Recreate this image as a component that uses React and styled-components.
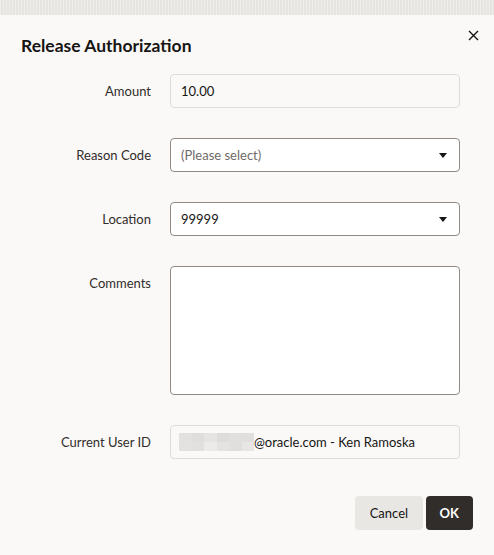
import React from "react";
import styled, { createGlobalStyle } from "styled-components";

const GlobalStyle = createGlobalStyle`
  html, body {
    margin: 0;
    padding: 0;
    background: #e8e6e3;
    font-family: "Lato", "Noto Sans", sans-serif;
    color: #161513;
  }
`;

const Backdrop = styled.div`
  height: 15px;
  background-color: #e7e5e2;
  background-image: repeating-linear-gradient(
    90deg,
    rgba(255, 255, 255, 0.35) 0 1px,
    transparent 1px 3px
  );
`;

const Dialog = styled.div`
  background: #fbf9f8;
  min-height: 540px;
  box-sizing: border-box;
  padding: 0 21px 24px 21px;
  display: flex;
  flex-direction: column;
`;

const Header = styled.div`
  display: flex;
  justify-content: space-between;
  align-items: flex-start;
  padding-top: 13px;
  height: 59px;
  box-sizing: border-box;
`;

const Title = styled.h1`
  margin: 7px 0 0;
  font-size: 17.5px;
  font-weight: 700;
  line-height: 22px;
  color: #161513;
`;

const CloseButton = styled.button`
  border: 0;
  background: transparent;
  padding: 0;
  width: 14px;
  height: 14px;
  margin-right: -7px;
  cursor: pointer;
  display: flex;
  align-items: center;
  justify-content: center;
`;

const Form = styled.div`
  display: grid;
  grid-template-columns: 130px 290px;
  column-gap: 19px;
  row-gap: 30px;
`;

const Label = styled.label`
  text-align: right;
  font-size: 13px;
  line-height: 34px;
  color: #312d2a;
`;

const Field = styled.div`
  box-sizing: border-box;
  height: ${(p) => p.height || 34}px;
  border: 1px solid ${(p) => (p.readOnly ? "#dfdcd8" : "#8f8a86")};
  border-radius: 4px;
  background: ${(p) => (p.readOnly ? "transparent" : "#ffffff")};
  display: flex;
  align-items: center;
  justify-content: space-between;
  padding: 0 12px 0 10px;
  font-size: 13px;
  color: ${(p) => (p.placeholder ? "#6f6a66" : "#161513")};
`;

const Caret = styled.span`
  width: 0;
  height: 0;
  border-left: 4.5px solid transparent;
  border-right: 4.5px solid transparent;
  border-top: 5px solid #161513;
`;

const Redacted = styled.span`
  display: inline-grid;
  grid-template-columns: repeat(6, 12.5px);
  grid-template-rows: 9px 9px;
  vertical-align: middle;
`;

const Pixel = styled.span`
  background: ${(p) => p.shade};
`;

const UserText = styled.span`
  display: flex;
  align-items: center;
  margin-left: -2px;
`;

const Footer = styled.div`
  display: flex;
  justify-content: flex-end;
  gap: 3px;
  margin-top: 37px;
`;

const Button = styled.button`
  height: 34px;
  border: 0;
  border-radius: 4px;
  padding: 0 ${(p) => (p.primary ? 14 : 14.5)}px;
  font-family: inherit;
  font-size: 13px;
  font-weight: ${(p) => (p.primary ? 700 : 400)};
  background: ${(p) => (p.primary ? "#312d2a" : "#e9e7e4")};
  color: ${(p) => (p.primary ? "#ffffff" : "#161513")};
  cursor: pointer;
`;

const shades = [
  "#e3e1df", "#e0dedc", "#e6e4e2", "#dedcda", "#e2e0de", "#e1dfdd",
  "#e4e2e0", "#e2e0de", "#eceae8", "#e5e3e1", "#e1dfdd", "#e8e6e4",
];

const App = () => {
  return (
    <>
      <GlobalStyle />
      <Backdrop />
      <Dialog>
        <Header>
          <Title>Release Authorization</Title>
          <CloseButton aria-label="Close">
            <svg width="11" height="11" viewBox="0 0 11 11">
              <path
                d="M1 1 L10 10 M10 1 L1 10"
                stroke="#161513"
                strokeWidth="1.4"
                fill="none"
              />
            </svg>
          </CloseButton>
        </Header>

        <Form>
          <Label>Amount</Label>
          <Field readOnly>10.00</Field>

          <Label>Reason Code</Label>
          <Field placeholder>
            (Please select)
            <Caret />
          </Field>

          <Label>Location</Label>
          <Field>
            99999
            <Caret />
          </Field>

          <Label>Comments</Label>
          <Field height={129} />

          <Label>Current User ID</Label>
          <Field readOnly>
            <UserText>
              <Redacted>
                {shades.map((s, i) => (
                  <Pixel key={i} shade={s} />
                ))}
              </Redacted>
              @oracle.com - Ken Ramoska
            </UserText>
          </Field>
        </Form>

        <Footer>
          <Button>Cancel</Button>
          <Button primary>OK</Button>
        </Footer>
      </Dialog>
    </>
  );
};

export default App;
